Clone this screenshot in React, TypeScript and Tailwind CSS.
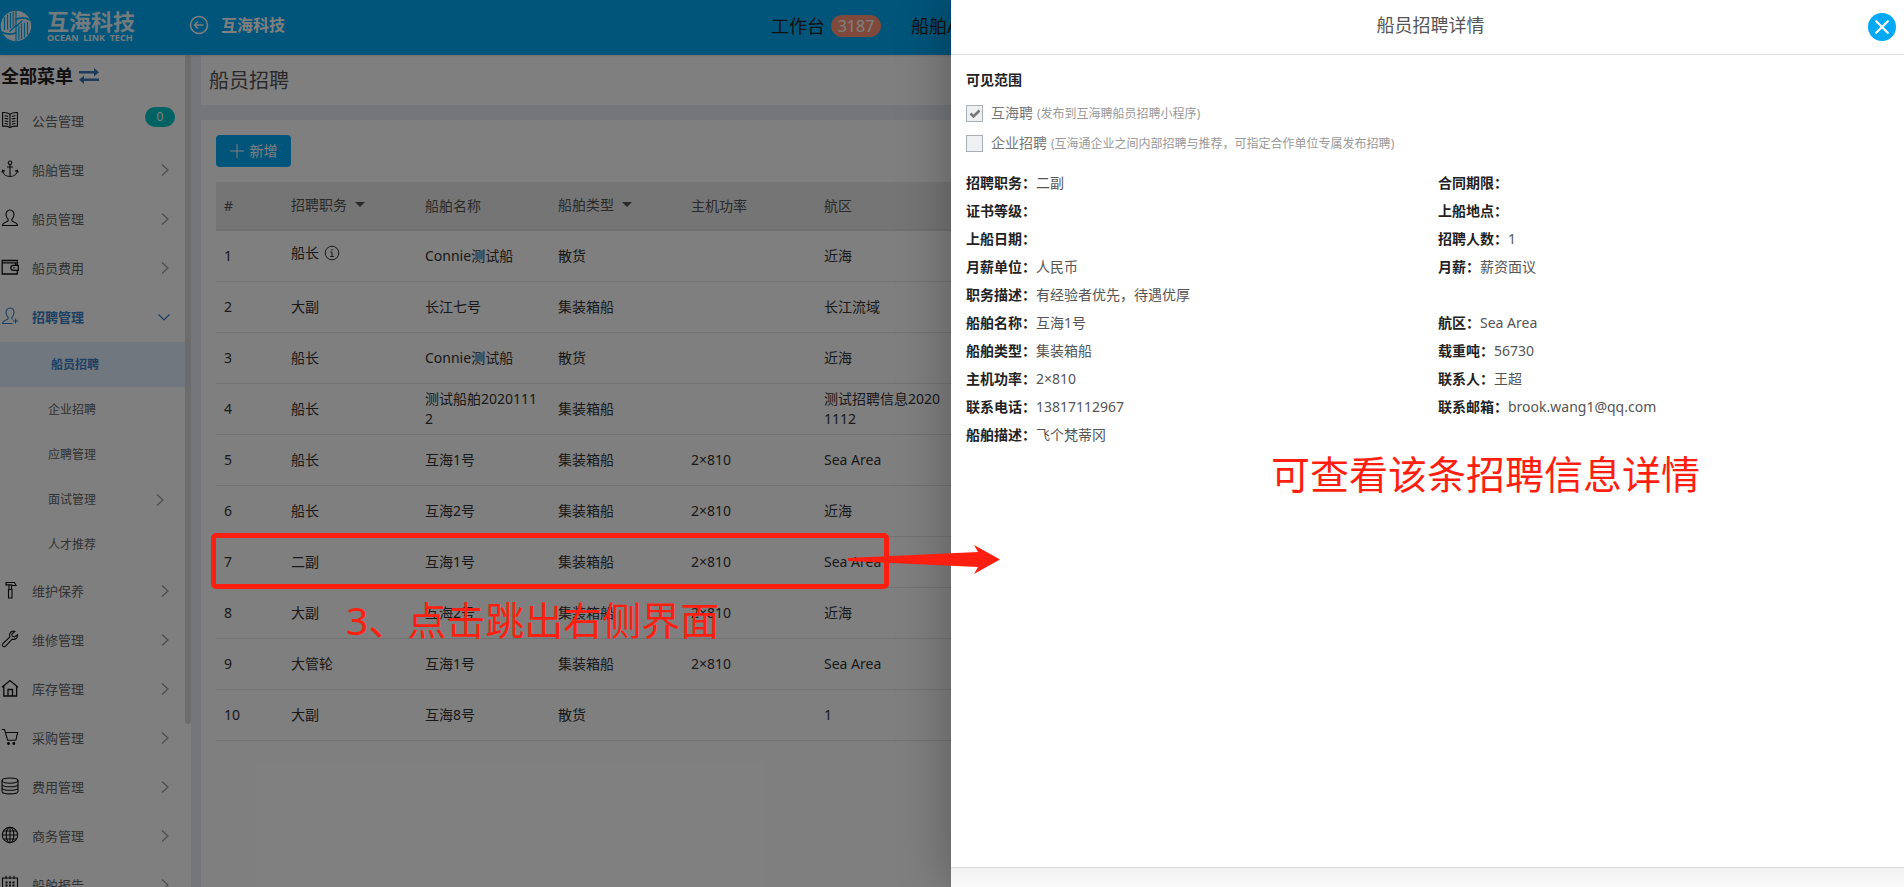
import type { ReactNode } from "react";

type MenuEntry = {
  label: string;
  icon: ReactNode;
  badge?: string;
  open?: boolean;
  children?: { label: string; active?: boolean; nested?: boolean }[];
};

function Icon({ children }: { children: ReactNode }) {
  return (
    <svg viewBox="0 0 18 18" className="size-[18px] shrink-0" fill="none" stroke="currentColor" strokeWidth="1.1" aria-hidden="true">
      {children}
    </svg>
  );
}

const bookIcon = (
  <Icon>
    <path d="M9 3.2C7 1.8 4 1.4 1.6 1.6v13.6c2.6-.2 5.400 0 7.400 1.400 2-1.400 4.800-1.600 7.400-1.400V1.600C14 1.400 11 1.800 9 3.200zM9 3.200v13.400M3.600 4.800c1.300 0 2.400.2 3.600.7M3.600 7.400c1.300 0 2.400.2 3.600.7M3.600 10c1.300 0 2.400.2 3.600.7M3.600 12.500c1.300 0 2.400.2 3.600.7M14.400 4.800c-1.300 0-2.400.2-3.600.7M14.400 7.400c-1.300 0-2.400.2-3.600.7M14.400 10c-1.300 0-2.400.2-3.600.7M14.400 12.500c-1.300 0-2.400.2-3.600.7" />
  </Icon>
);
const anchorIcon = (
  <Icon>
    <circle cx="9" cy="2.800" r="1.800" />
    <path d="M9 4.600v12M6 7h6M1.600 10.500c.5 3.600 3.600 6 7.400 6s6.900-2.400 7.400-6M.8 12.500l.9-2.200 2.300 1M17.200 12.500l-.9-2.200-2.300 1" />
  </Icon>
);
const userPath =
  "M9 1C6.400 1 5 3 5 5.600c0 2 .8 3.700 2.100 4.600v1.300c0 .6-.4.9-.9 1.100-2.300.8-4.400 1.600-4.700 3.900h15c-.3-2.300-2.400-3.100-4.700-3.900-.5-.2-.9-.5-.9-1.100v-1.300C12.200 9.300 13 7.600 13 5.600 13 3 11.600 1 9 1z";
const userIcon = (
  <Icon>
    <path d={userPath} />
  </Icon>
);
const userPlusIcon = (
  <Icon>
    <path d="M11.500 16.500h-10c.3-2.300 2.400-3.100 4.700-3.900.5-.2.9-.5.9-1.100v-1.300C5.800 9.300 5 7.600 5 5.600 5 3 6.400 1 9 1s4 2 4 4.600c0 2-.8 3.700-2.100 4.600v1.300c0 .4.2.7.6.9M14.600 11.500v5M12.100 14h5" />
  </Icon>
);
const walletIcon = (
  <Icon>
    <path d="M16.300 7V2.500H1.200V16h15.100v-3.500M1.200 4.800h13.500V7M17.300 7.300h-5a2.500 2.500 0 000 5h5zM12.300 9.800h1.500" strokeWidth="1.300" />
  </Icon>
);
const hammerIcon = (
  <Icon>
    <path d="M5 1.500h8.500l1.500 3h-2.500c-1 0-1.500-.6-2.500-.6H5zM8 4.500V8M10.500 4.500V8M7.500 8.500h3.500v8.500H7.500z" />
  </Icon>
);
const wrenchIcon = (
  <Icon>
    <path d="M16.500 4.800l-3 2.200-2.200-.8-.4-2.300 3-2.500c-2.500-.9-5.400.7-5.300 3.700 0 .8.100 1.200.3 1.700L2 13.500c-1.800 2 .6 4.400 2.600 2.700l6.600-7.100c3 .9 5.700-1.100 5.300-4.300z" />
  </Icon>
);
const houseIcon = (
  <Icon>
    <path d="M1 8.300L9 1.500l8 6.800M2.800 7v10h12.800V7M7 17v-6.500h4.500V17" strokeWidth="1.300" />
  </Icon>
);
const cartIcon = (
  <Icon>
    <path d="M.8 1.500h2.700l3.200 10.800h8.100l1.900-7.800H4.500" />
    <circle cx="7.500" cy="15.500" r=".9" fill="currentColor" />
    <circle cx="12.800" cy="15.500" r=".9" fill="currentColor" />
  </Icon>
);
const coinsIcon = (
  <Icon>
    <ellipse cx="9" cy="3.600" rx="8" ry="2.600" />
    <path d="M1 3.600v10.600c0 1.500 3.600 2.700 8 2.700s8-1.200 8-2.700V3.600M1 7.200c0 1.500 3.600 2.600 8 2.600s8-1.100 8-2.600M1 10.700c0 1.500 3.600 2.600 8 2.600s8-1.100 8-2.600" />
  </Icon>
);
const globeIcon = (
  <Icon>
    <circle cx="9" cy="9" r="7.700" />
    <ellipse cx="9" cy="9" rx="3.800" ry="7.700" />
    <path d="M1.300 9h15.400M9 1.300v15.400M2.500 5h13M2.500 13h13" />
  </Icon>
);
const calendarIcon = (
  <Icon>
    <path d="M1.500 3h15v14h-15zM5 .8V4M9 .8V4M13 .8V4" />
    <path d="M4.500 7.500h2M8 7.500h2M11.500 7.500h2M4.500 10.500h2M8 10.500h2M11.500 10.500h2M4.500 13.500h2M8 13.500h2M11.500 13.500h2" strokeWidth="2" />
  </Icon>
);

const menu: MenuEntry[] = [
  { label: "公告管理", icon: bookIcon, badge: "0" },
  { label: "船舶管理", icon: anchorIcon },
  { label: "船员管理", icon: userIcon },
  { label: "船员费用", icon: walletIcon },
  {
    label: "招聘管理",
    icon: userPlusIcon,
    open: true,
    children: [
      { label: "船员招聘", active: true },
      { label: "企业招聘" },
      { label: "应聘管理" },
      { label: "面试管理", nested: true },
      { label: "人才推荐" },
    ],
  },
  { label: "维护保养", icon: hammerIcon },
  { label: "维修管理", icon: wrenchIcon },
  { label: "库存管理", icon: houseIcon },
  { label: "采购管理", icon: cartIcon },
  { label: "费用管理", icon: coinsIcon },
  { label: "商务管理", icon: globeIcon },
  { label: "船舶报告", icon: calendarIcon },
];

const rows = [
  ["1", "船长", "Connie测试船", "散货", "", "近海"],
  ["2", "大副", "长江七号", "集装箱船", "", "长江流域"],
  ["3", "船长", "Connie测试船", "散货", "", "近海"],
  ["4", "船长", "测试船舶20201112", "集装箱船", "", "测试招聘信息20201112"],
  ["5", "船长", "互海1号", "集装箱船", "2×810", "Sea Area"],
  ["6", "船长", "互海2号", "集装箱船", "2×810", "近海"],
  ["7", "二副", "互海1号", "集装箱船", "2×810", "Sea Area"],
  ["8", "大副", "互海2号", "集装箱船", "2×810", "近海"],
  ["9", "大管轮", "互海1号", "集装箱船", "2×810", "Sea Area"],
  ["10", "大副", "互海8号", "散货", "", "1"],
];

const details: [string, string, string?, string?][] = [
  ["招聘职务", "二副", "合同期限", ""],
  ["证书等级", "", "上船地点", ""],
  ["上船日期", "", "招聘人数", "1"],
  ["月薪单位", "人民币", "月薪", "薪资面议"],
  ["职务描述", "有经验者优先，待遇优厚"],
  ["船舶名称", "互海1号", "航区", "Sea Area"],
  ["船舶类型", "集装箱船", "载重吨", "56730"],
  ["主机功率", "2×810", "联系人", "王超"],
  ["联系电话", "13817112967", "联系邮箱", "brook.wang1@qq.com"],
  ["船舶描述", "飞个梵蒂冈"],
];

function Chevron({ down = false }: { down?: boolean }) {
  return (
    <svg viewBox="0 0 12 12" className="size-3 shrink-0" fill="none" stroke="currentColor" strokeWidth="1.200" aria-hidden="true">
      <path d={down ? "M.5 3.500L6 9l5.500-5.500" : "M3 .5L9 6l-6 5.500"} />
    </svg>
  );
}

function Logo() {
  return (
    <a href="#" className="flex w-[189px] items-center gap-[15px] pb-1 text-white/90">
      <svg viewBox="0 0 32 32" className="size-8 shrink-0" aria-hidden="true">
        <circle cx="16" cy="16" r="15.200" fill="currentColor" />
        <g fill="none" stroke="#03a9f4">
          <path d="M16 0v10M4.500 7v13M7.500 4.500v15M10.500 3v15.500M13.200 1.500v15" strokeWidth="1.200" />
          <path d="M16 32V22M27.500 25V12M24.500 27.500v-15M21.500 29V13.500M18.800 30.500v-15" strokeWidth="1.200" />
          <path d="M15.500 9.500c5-2.500 10-2 14.500.5M16.500 22.500c-5 2.500-10 2-14.500-.5" strokeWidth="1.600" />
          <path d="M16 9.500v6l-6.500 6M16 22.500v-6l6.500-6" strokeWidth="1.300" />
        </g>
      </svg>
      <span className="flex flex-col">
        <span className="text-[22px] leading-[24px] font-bold">互海科技</span>
        <span className="text-[9px] leading-[10px] font-bold whitespace-pre">OCEAN  LINK  TECH</span>
      </span>
    </a>
  );
}

function TopBar() {
  return (
    <header className="relative z-10 flex h-[55px] shrink-0 items-center bg-[#03a9f4] shadow">
      <Logo />
      <button type="button" className="flex items-center gap-3 pb-[6px] font-bold text-white" aria-label="互海科技">
        <svg viewBox="0 0 20 20" className="size-5" fill="none" stroke="currentColor" strokeWidth="1.500" aria-hidden="true">
          <circle cx="10" cy="10" r="8.500" />
          <path d="M14.500 10h-9M9 6.500L5.500 10 9 13.500" />
        </svg>
        <span className="text-base leading-5">互海科技</span>
      </button>
      <nav className="ml-[486px] flex items-center gap-[30px] pb-1 text-lg whitespace-nowrap text-[#222]">
        <a href="#" className="flex items-center gap-[6px]">
          工作台
          <span className="flex h-[22px] w-[50px] items-center justify-center rounded-full bg-[#ff9478] text-base text-white">3187</span>
        </a>
        <a href="#">船舶AIS</a>
      </nav>
    </header>
  );
}

function Sidebar() {
  return (
    <aside className="flex w-[191px] shrink-0 overflow-hidden bg-white">
      <div className="flex-1">
        <div className="flex h-[42px] items-center gap-[6px] pl-px text-lg font-bold text-[#222]">
          全部菜单
          <svg viewBox="0 0 20 16" className="h-4 w-5 text-[#3a78b8]" fill="currentColor" aria-hidden="true">
            <path d="M0 3h15V0l5 4.200-5 4.200V5.400H0zM20 13H5v3l-5-4.200 5-4.200v3h15z" />
          </svg>
        </div>
        <ul>
          {menu.map((item) => (
            <li key={item.label}>
              <a
                href="#"
                className={
                  item.open
                    ? "flex h-[49px] items-center gap-[13px] pr-[15px] pl-px text-[13px] font-bold text-[#3a7fc4]"
                    : "flex h-[49px] items-center gap-[13px] pr-[14px] pl-px text-[13px] text-[#666]"
                }
              >
                <span className={item.open ? "pb-1" : "pb-1 text-[#111]"}>{item.icon}</span>
                <span className="flex-1">{item.label}</span>
                {item.badge ? (
                  <span className="-mr-1 mb-[10px] flex h-5 w-[30px] items-center justify-center rounded-full bg-[#00c4c4] text-xs text-white">
                    {item.badge}
                  </span>
                ) : (
                  <span className={item.open ? "pb-[2px]" : "pb-[2px] text-[#999]"}>
                    <Chevron down={item.open} />
                  </span>
                )}
              </a>
              {item.children && (
                <ul>
                  {item.children.map((child) => (
                    <li key={child.label}>
                      <a
                        href="#"
                        className={
                          child.active
                            ? "flex h-[45px] items-center bg-[#e2efff] pl-[51px] text-xs font-bold text-[#3a7fc4]"
                            : "flex h-[45px] items-center justify-between pr-[19px] pl-12 text-xs text-[#666]"
                        }
                      >
                        {child.label}
                        {child.nested && (
                          <span className="text-[#999]">
                            <Chevron />
                          </span>
                        )}
                      </a>
                    </li>
                  ))}
                </ul>
              )}
            </li>
          ))}
        </ul>
      </div>
      <div className="h-[669px] w-[6px] rounded-full bg-[#d8d8d8]" />
    </aside>
  );
}

function SortHeader({ children }: { children: ReactNode }) {
  return (
    <button type="button" className="flex items-center gap-2 pb-[2px]">
      {children}
      <svg viewBox="0 0 10 5" className="h-[5px] w-[10px]" fill="currentColor" aria-hidden="true">
        <path d="M0 0h10L5 5z" />
      </svg>
    </button>
  );
}

function CrewTable() {
  return (
    <table className="w-full table-fixed text-left text-sm leading-5 text-[#333]">
      <colgroup>
        <col className="w-[67px]" />
        <col className="w-[134px]" />
        <col className="w-[133px]" />
        <col className="w-[133px]" />
        <col className="w-[133px]" />
        <col className="w-[133px]" />
        <col />
      </colgroup>
      <thead>
        <tr className="h-12 border-b-2 border-[#dfdfdf] bg-[#ebebeb] text-[#555] [&>th]:px-2 [&>th]:font-normal">
          <th>#</th>
          <th>
            <SortHeader>招聘职务</SortHeader>
          </th>
          <th>船舶名称</th>
          <th>
            <SortHeader>船舶类型</SortHeader>
          </th>
          <th>主机功率</th>
          <th>航区</th>
          <th />
        </tr>
      </thead>
      <tbody>
        {rows.map((row, index) => (
          <tr key={row[0]} className="h-[51px] border-b border-[#e4e4e4] [&>td]:px-2 [&>td]:break-all">
            {row.map((cell, column) => (
              <td key={column}>
                {index === 0 && column === 1 ? (
                  <span className="flex items-center gap-[5px] pb-[6px]">
                    {cell}
                    <svg viewBox="0 0 16 16" className="size-4" fill="none" stroke="currentColor" aria-label="详情">
                      <circle cx="8" cy="8" r="6.800" />
                      <path d="M8 4v1.500M6.500 7H8v4.500M6.200 11.500h3.600" />
                    </svg>
                  </span>
                ) : (
                  cell
                )}
              </td>
            ))}
            <td />
          </tr>
        ))}
      </tbody>
    </table>
  );
}

function Detail({ label, value }: { label?: string; value?: string }) {
  return (
    <div className="w-1/2 px-[15px]">
      {label && (
        <>
          <dt className="inline font-bold text-[#222]">{label}：</dt>
          <dd className="inline">{value}</dd>
        </>
      )}
    </div>
  );
}

function Scope({ label, note, checked = false }: { label: string; note: string; checked?: boolean }) {
  return (
    <label className="flex h-[30px] items-center text-sm text-[#777]">
      <span className="relative mr-2 size-[17px]">
        <input
          type="checkbox"
          defaultChecked={checked}
          className="block size-[17px] appearance-none border border-[#a9afb8] bg-[#eef0f2]"
        />
        {checked && (
          <svg viewBox="0 0 17 17" className="pointer-events-none absolute inset-0" fill="none" stroke="#777" strokeWidth="2.600" aria-hidden="true">
            <path d="M4.500 8.500l3 3 6-6" />
          </svg>
        )}
      </span>
      {label}
      <span className="pt-[2px] pl-1 text-xs text-[#999]">({note})</span>
    </label>
  );
}

function Drawer() {
  return (
    <section
      role="dialog"
      aria-label="船员招聘详情"
      className="absolute inset-y-0 right-0 flex w-[calc(50%+1px)] flex-col bg-white shadow-[0_0_50px_rgba(0,0,0,0.3)]"
    >
      <header className="relative flex h-[55px] shrink-0 items-center justify-center border-b border-[#e0e0e0] pb-1 pl-[6px]">
        <h2 className="text-lg text-[#555]">船员招聘详情</h2>
        <button
          type="button"
          aria-label="关闭"
          className="absolute top-[13px] right-2 flex size-7 items-center justify-center rounded-full bg-[#03a9f4] text-white"
        >
          <svg viewBox="0 0 14 14" className="size-[14px]" fill="none" stroke="currentColor" strokeWidth="2.200" strokeLinecap="round" aria-hidden="true">
            <path d="M1.200 1.200l11.600 11.600M12.800 1.200L1.200 12.800" />
          </svg>
        </button>
      </header>
      <div className="flex-1 pt-[15px] pr-[9px] text-sm text-[#555]">
        <div className="px-[15px]">
          <h3 className="mb-2 leading-5 font-bold text-[#222]">可见范围</h3>
          <Scope label="互海聘" note="发布到互海聘船员招聘小程序" checked />
          <Scope label="企业招聘" note="互海通企业之间内部招聘与推荐，可指定合作单位专属发布招聘" />
        </div>
        <dl className="mt-[11px] leading-7">
          {details.map(([label, value, otherLabel, otherValue]) => (
            <div key={label} className="flex">
              <Detail label={label} value={value} />
              <Detail label={otherLabel} value={otherValue} />
            </div>
          ))}
        </dl>
      </div>
      <footer className="h-5 shrink-0 border-t border-[#dedede] bg-linear-to-b from-[#f1f1f1] to-[#fafafa]" />
    </section>
  );
}

function Annotations() {
  return (
    <div className="pointer-events-none absolute inset-0 text-[39px] leading-[48px] whitespace-nowrap text-[#ff1f10]">
      <div className="absolute top-[533px] left-[211px] h-[56px] w-[678px] rounded-[5px] border-[5px] border-current" />
      <svg viewBox="0 0 152 30" className="absolute top-[545px] left-[848px] h-[30px] w-[152px]" fill="currentColor" aria-hidden="true">
        <path d="M0 13L130 7 126 0l26 14.500L126 29l4-7L0 16z" />
      </svg>
      <p className="absolute top-[596px] left-[346px]">3、点击跳出右侧界面</p>
      <p className="absolute top-[450px] left-[1271px]">可查看该条招聘信息详情</p>
    </div>
  );
}

export default function App() {
  return (
    <div className="relative flex h-screen flex-col overflow-hidden bg-[#e9edf3] font-['Noto_Sans','Noto_Sans_CJK_SC',sans-serif]">
      <TopBar />
      <div className="flex min-h-0 flex-1">
        <Sidebar />
        <main className="ml-[10px] flex min-w-0 flex-1 flex-col gap-[15px]">
          <h1 className="flex h-[50px] shrink-0 items-center bg-white px-2 pt-[2px] text-xl text-[#555]">船员招聘</h1>
          <div className="flex-1 bg-white p-[15px]">
            <button type="button" className="mb-[15px] flex h-8 w-[75px] items-center justify-center gap-[6px] rounded bg-[#03a9f4] text-sm text-white">
              <svg viewBox="0 0 14 14" className="size-[14px]" stroke="currentColor" aria-hidden="true">
                <path d="M0 7h14M7 0v14" />
              </svg>
              新增
            </button>
            <CrewTable />
          </div>
        </main>
      </div>
      <div className="absolute inset-0 z-20 bg-black/50">
        <Drawer />
        <Annotations />
      </div>
    </div>
  );
}
